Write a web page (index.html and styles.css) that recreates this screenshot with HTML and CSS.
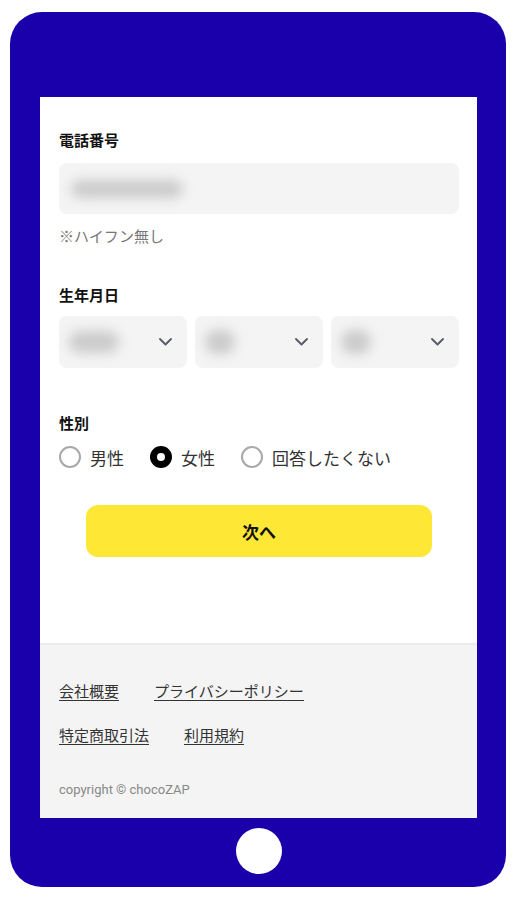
FILE: index.html
```html
<!DOCTYPE html>
<html lang="ja">
<head>
  <meta charset="UTF-8">
  <meta name="viewport" content="width=device-width, initial-scale=1.0">
  <title>会員登録 - chocoZAP</title>
  <link rel="stylesheet" href="styles.css">
</head>
<body>

  <div class="phone">
    <div class="screen">
      <form class="form">
        <label class="field-label">電話番号</label>
        <div class="input-box">
          <span class="blur blur-phone"></span>
        </div>
        <p class="note">※ハイフン無し</p>

        <label class="field-label label-gap">生年月日</label>
        <div class="select-row">
          <div class="select-box">
            <span class="blur blur-year"></span>
            <svg class="chevron" width="13" height="8" viewBox="0 0 13 8"><path d="M1 1l5.5 5.5L12 1" fill="none" stroke="#555a66" stroke-width="1.8" stroke-linecap="round" stroke-linejoin="round"/></svg>
          </div>
          <div class="select-box">
            <span class="blur blur-small"></span>
            <svg class="chevron" width="13" height="8" viewBox="0 0 13 8"><path d="M1 1l5.5 5.5L12 1" fill="none" stroke="#555a66" stroke-width="1.8" stroke-linecap="round" stroke-linejoin="round"/></svg>
          </div>
          <div class="select-box">
            <span class="blur blur-small"></span>
            <svg class="chevron" width="13" height="8" viewBox="0 0 13 8"><path d="M1 1l5.5 5.5L12 1" fill="none" stroke="#555a66" stroke-width="1.8" stroke-linecap="round" stroke-linejoin="round"/></svg>
          </div>
        </div>

        <label class="field-label label-gap-lg">性別</label>
        <div class="radio-row">
          <span class="radio-item"><span class="radio"></span>男性</span>
          <span class="radio-item"><span class="radio checked"></span>女性</span>
          <span class="radio-item"><span class="radio"></span>回答したくない</span>
        </div>

        <button type="button" class="next-btn">次へ</button>
      </form>

      <footer class="footer">
        <div class="links">
          <a href="#">会社概要</a>
          <a href="#">プライバシーポリシー</a>
        </div>
        <div class="links">
          <a href="#">特定商取引法</a>
          <a href="#">利用規約</a>
        </div>
        <p class="copyright">copyright © chocoZAP</p>
      </footer>
    </div>
    <div class="home"></div>
  </div>

</body>
</html>
```

FILE: styles.css
```css
body {
  margin: 0;
  padding: 0;
  background: #fff;
  font-family: "Noto Sans CJK JP", "Noto Sans", sans-serif;
  color: #111;
}

.phone {
  width: 496px;
  height: 875px;
  margin: 12px 0 0 10px;
  padding: 85px 29px 0 30px;
  box-sizing: border-box;
  background: #1900aa;
  border-radius: 32px;
  display: flex;
  flex-direction: column;
  align-items: center;
}

.screen {
  width: 437px;
  height: 721px;
  background: #fff;
  display: flex;
  flex-direction: column;
}

.home {
  width: 46px;
  height: 46px;
  margin-top: 10px;
  border-radius: 50%;
  background: #fff;
}

.form {
  padding: 33px 18px 0 19px;
  display: flex;
  flex-direction: column;
}

.field-label {
  font-size: 15px;
  line-height: 20px;
  font-weight: bold;
  color: #111;
}

.label-gap {
  margin-top: 39px;
}

.label-gap-lg {
  margin-top: 45px;
}

.input-box {
  margin-top: 13px;
  height: 51px;
  background: #f4f4f4;
  border-radius: 8px;
  display: flex;
  align-items: center;
  padding-left: 12px;
}

.blur {
  display: block;
  background: #cbcbcb;
  border-radius: 12px;
  filter: blur(6px);
}

.blur-phone {
  width: 112px;
  height: 18px;
}

.blur-year {
  width: 50px;
  height: 22px;
}

.blur-small {
  width: 30px;
  height: 24px;
}

.note {
  margin: 12px 0 0;
  font-size: 15px;
  line-height: 20px;
  color: #777;
}

.select-row {
  margin-top: 11px;
  display: grid;
  grid-template-columns: repeat(3, 1fr);
  gap: 8px;
}

.select-box {
  height: 52px;
  background: #f4f4f4;
  border-radius: 8px;
  display: flex;
  align-items: center;
  justify-content: space-between;
  padding: 0 15px 0 10px;
}

.chevron {
  display: block;
}

.radio-row {
  margin-top: 12px;
  height: 24px;
  display: flex;
  align-items: center;
  gap: 26px;
}

.radio-item {
  display: flex;
  align-items: center;
  gap: 9px;
  font-size: 17px;
  color: #333;
}

.radio {
  width: 22px;
  height: 22px;
  box-sizing: border-box;
  border: 2px solid #a8a8a8;
  border-radius: 50%;
  background: #fff;
}

.radio.checked {
  border: 7px solid #000;
}

.next-btn {
  margin: 36px auto 0;
  width: 346px;
  height: 52px;
  border: none;
  border-radius: 12px;
  background: #ffe835;
  font-family: inherit;
  font-size: 17px;
  font-weight: bold;
  color: #111;
  cursor: pointer;
}

.footer {
  margin-top: auto;
  height: 175px;
  box-sizing: border-box;
  background: #f4f4f4;
  border-top: 2px solid #ebebeb;
  padding: 36px 19px 0;
}

.links {
  display: flex;
  gap: 35px;
  margin-bottom: 24px;
}

.links a {
  display: inline-block;
  font-size: 15px;
  line-height: 19px;
  color: #333;
  text-decoration: none;
  border-bottom: 1.5px solid #333;
}

.copyright {
  margin: 37px 0 0;
  font-family: Roboto, "Noto Sans", sans-serif;
  font-size: 13px;
  line-height: 16px;
  color: #888;
}
```
